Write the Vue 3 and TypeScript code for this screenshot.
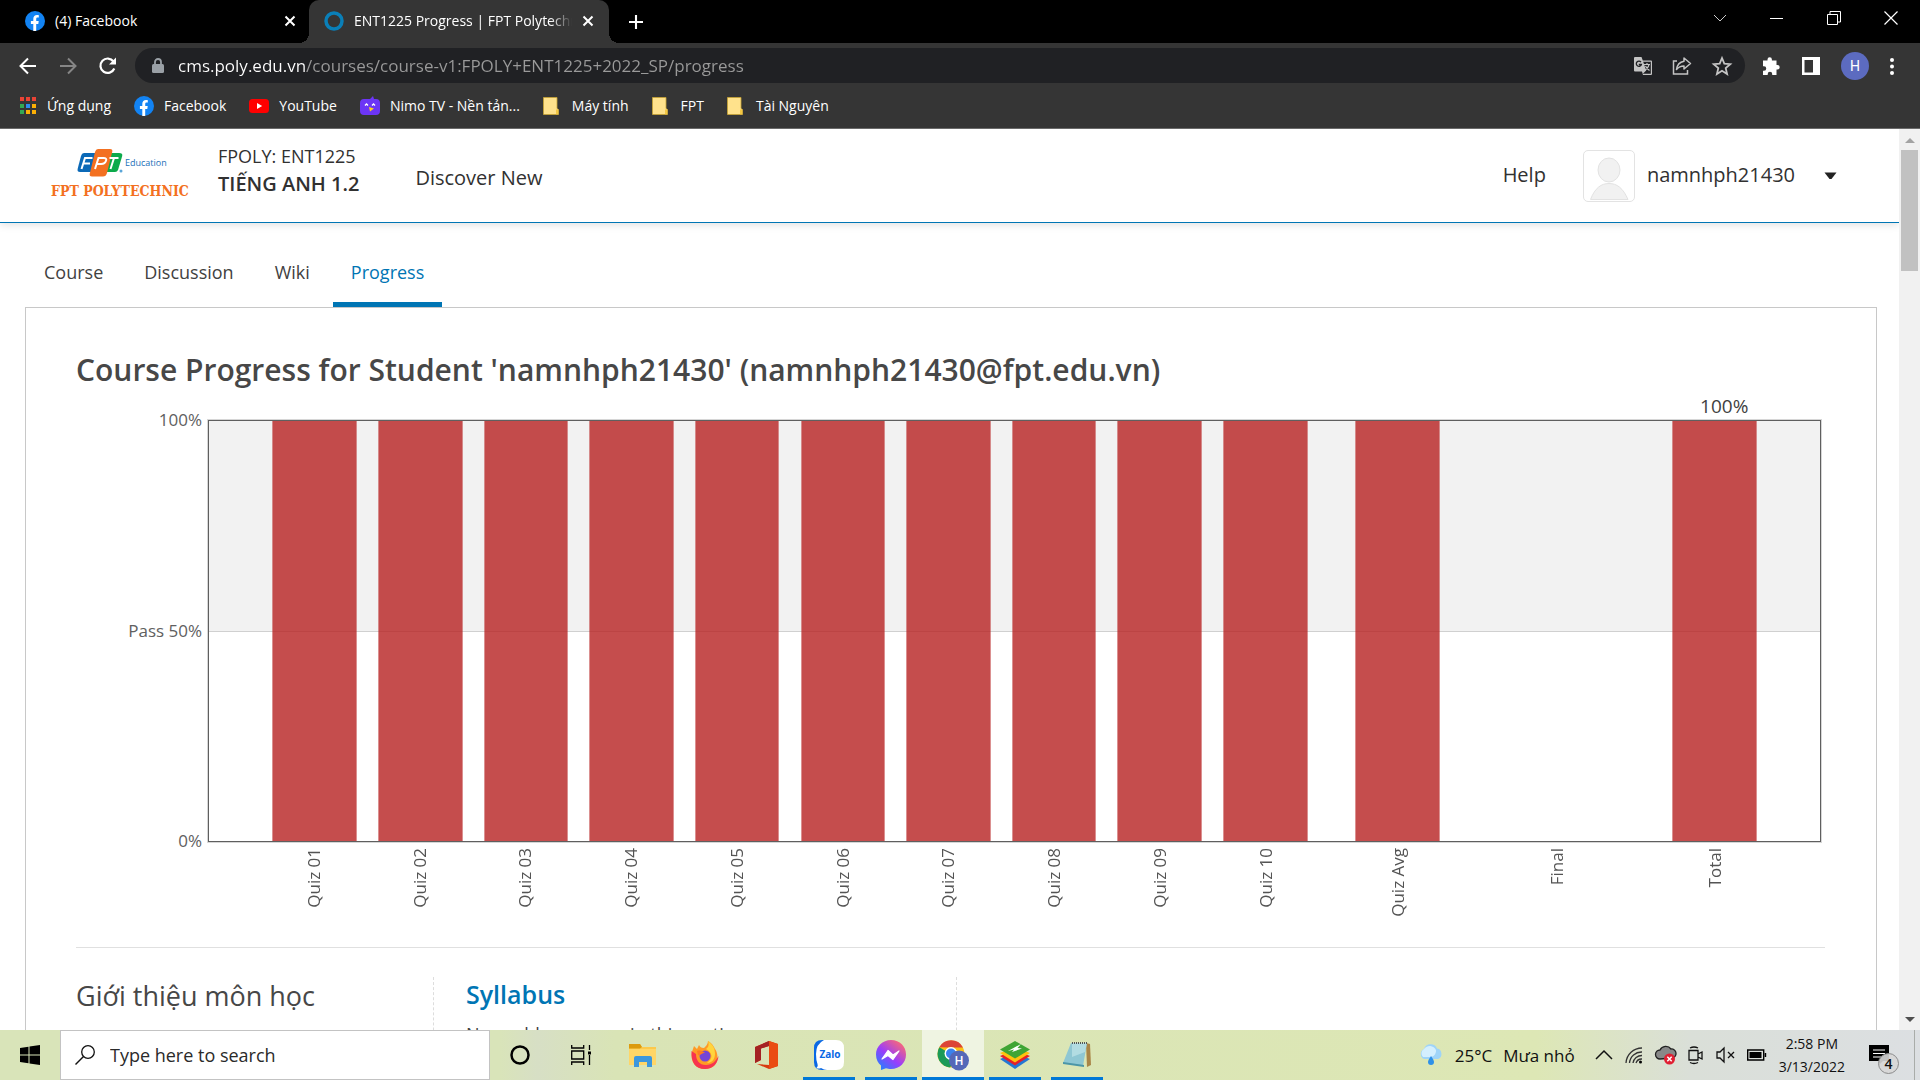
<script setup lang="ts">
interface Bar {
  label: string
  value: number
  gap: number
}

const host = 'cms.poly.edu.vn'
const path = '/courses/course-v1:FPOLY+ENT1225+2022_SP/progress'

const quizzes: Bar[] = Array.from({ length: 10 }, (_, i) => ({
  label: 'Quiz ' + String(i + 1).padStart(2, '0'),
  value: 100,
  gap: i === 0 ? 12 : 4,
}))

const bars: Bar[] = [
  ...quizzes,
  { label: 'Quiz Avg', value: 100, gap: 9 },
  { label: 'Final', value: 0, gap: 14 },
  { label: 'Total', value: 100, gap: 14 },
]

const columns = bars.map((b) => `${b.gap}fr 16fr`).join(' ') + ' 12fr'

const tabs = ['Course', 'Discussion', 'Wiki', 'Progress']
const active = 'Progress'
</script>

<template>
  <div class="screen">
    <header class="browser">
      <div class="tabstrip">
        <div class="tab">
          <svg class="i20" viewBox="0 0 20 20"><circle cx="10" cy="10" r="10" fill="#1283f3" /><path fill="#fff" d="M8.300 20v-7H5.900v-3h2.400V8c0-2.600 1.500-4 3.700-4 .9 0 1.800.2 1.800.2v2.400h-1.200c-1.100 0-1.400.7-1.400 1.400v2h2.500l-.4 3h-2.100v7z" /></svg>
          <span class="tab-title">(4) Facebook</span>
          <button class="plain" aria-label="Close tab"><svg class="i12" viewBox="0 0 12 12"><path d="M1.500 1.500l9 9M10.500 1.500l-9 9" stroke="#fff" stroke-width="2" /></svg></button>
        </div>
        <div class="tab current">
          <svg class="i20" viewBox="0 0 20 20"><circle cx="10" cy="10" r="8" fill="none" stroke="#0a7fb8" stroke-width="3.500" /></svg>
          <span class="tab-title">ENT1225 Progress | FPT Polytechnic</span>
          <button class="plain" aria-label="Close tab"><svg class="i12" viewBox="0 0 12 12"><path d="M1.500 1.500l9 9M10.500 1.500l-9 9" stroke="#fff" stroke-width="2" /></svg></button>
        </div>
        <button class="plain newtab" aria-label="New tab"><svg class="i14" viewBox="0 0 16 16"><path d="M8 0v16M0 8h16" stroke="#fff" stroke-width="2.400" /></svg></button>
        <div class="window-controls">
          <button class="plain" aria-label="Search tabs"><svg class="i14" viewBox="0 0 14 14"><path d="M1 4l6 6 6-6" fill="none" stroke="#ccc" /></svg></button>
          <button class="plain" aria-label="Minimize"><svg class="i14" viewBox="0 0 14 14"><path d="M0 7.500h13" stroke="#fff" /></svg></button>
          <button class="plain" aria-label="Restore"><svg class="i14" viewBox="0 0 14 14"><path d="M.5 3.500h10v10H.5zM3 3V.5h10.500v10.500H11" fill="none" stroke="#fff" /></svg></button>
          <button class="plain" aria-label="Close"><svg class="i14" viewBox="0 0 14 14"><path d="M.5 .5l13 13M13.500 .5l-13 13" stroke="#fff" stroke-width="1.200" /></svg></button>
        </div>
      </div>

      <div class="toolbar">
        <div class="nav-buttons">
          <button class="plain" aria-label="Back"><svg class="i20" viewBox="0 0 20 20"><path d="M18 10H3M10 2.500L2.500 10l7.500 7.500" fill="none" stroke="#fff" stroke-width="2" /></svg></button>
          <button class="plain" aria-label="Forward"><svg class="i20" viewBox="0 0 20 20"><path d="M2 10h15M10 2.500l7.500 7.500-7.500 7.500" fill="none" stroke="#868686" stroke-width="2" /></svg></button>
          <button class="plain" aria-label="Reload"><svg class="i20" viewBox="0 0 20 20"><path d="M16.300 12.500A7.200 7.200 0 1 1 15.500 5.500" fill="none" stroke="#fff" stroke-width="2.200" /><path d="M18 1.500v7h-7z" fill="#fff" /></svg></button>
        </div>
        <div class="omnibox">
          <svg class="lock" viewBox="0 0 12 16"><rect y="6" width="12" height="9" rx="1.500" fill="#9aa0a6" /><path d="M3 6.500V4a3 3 0 0 1 6 0v2.500" fill="none" stroke="#9aa0a6" stroke-width="1.800" /></svg>
          <input class="url" aria-label="Address" :value="host + path" />
          <button class="plain" aria-label="Translate"><svg class="i18" viewBox="0 0 18 18"><path d="M1 0h6.500l1.300 3.500h8.200a1 1 0 0 1 1 1V17a1 1 0 0 1-1 1H9l-1-3.500H1a1 1 0 0 1-1-1V1a1 1 0 0 1 1-1z" fill="#c4c4c4" /><path d="M9.200 4.700l3 8.700-3.400 3.400h8V4.700z" fill="#202124" /><path d="M7 5.200A2.600 2.600 0 1 0 7.400 7.500H4.800" fill="none" stroke="#202124" stroke-width="1.300" /><path d="M10 7.500h6M13 6v1.500M15 7.500c-.5 2.500-2 4.500-4 5.500M11.500 9c1 2 2 3 4 4.500" fill="none" stroke="#c4c4c4" stroke-width="1.200" /></svg></button>
          <button class="plain" aria-label="Share"><svg class="i20" viewBox="0 0 20 20"><path d="M5 5H1.500v13h14v-4" fill="none" stroke="#c4c4c4" stroke-width="1.500" /><path d="M12 2l6.500 5.500L12 13v-3c-3.500 0-5.500 1-7.500 3.500C5 9.500 7.500 6 12 5.200z" fill="none" stroke="#c4c4c4" stroke-width="1.500" stroke-linejoin="round" /></svg></button>
          <button class="plain" aria-label="Bookmark this page"><svg class="i20" viewBox="0 0 20 20"><path d="M10 2l2.300 5.600 6 .5-4.600 4 1.400 5.900-5.100-3.200L4.900 18l1.400-5.900-4.600-4 6-.5z" fill="none" stroke="#c4c4c4" stroke-width="1.800" /></svg></button>
        </div>
        <div class="extensions">
          <button class="plain" aria-label="Extensions"><svg class="i20" viewBox="0 0 20 20"><path fill="#fff" d="M2 4.500h4.500V3.500a2.200 2.200 0 0 1 4.400 0v1h4.600V9h1a2.200 2.200 0 0 1 0 4.400h-1V19h-4.300v-1a2.200 2.200 0 0 0-4.500 0v1H2v-4.300h1a2.200 2.200 0 0 0 0-4.500H2z" /></svg></button>
          <button class="plain" aria-label="Side panel"><svg class="i18" viewBox="0 0 18 18"><path fill="#fff" fill-rule="evenodd" d="M0 0h18v18H0zM2.500 3v12.500H11V3z" /></svg></button>
          <button class="plain profile" aria-label="Profile">H</button>
          <button class="plain" aria-label="Menu"><svg class="dots" viewBox="0 0 4 18"><circle cx="2" cy="3" r="2" fill="#fff" /><circle cx="2" cy="9.500" r="2" fill="#fff" /><circle cx="2" cy="16" r="2" fill="#fff" /></svg></button>
        </div>
      </div>

      <nav class="bookmarks" aria-label="Bookmarks">
        <a href="#"><svg class="i18" viewBox="0 0 18 18"><path fill="#ea4335" d="M1 0h4v4H1zM7 0h4v4H7zM13 0h4v4h-4z" /><path fill="#34a853" d="M1 7h4v4H1zM1 13h4v4H1z" /><path fill="#2d8cf0" d="M7 7h4v4H7z" /><path fill="#fbaf05" d="M13 7h4v4h-4zM7 13h4v4H7zM13 13h4v4h-4z" /></svg>Ứng dụng</a>
        <a href="#"><svg class="i20" viewBox="0 0 20 20"><circle cx="10" cy="10" r="10" fill="#1283f3" /><path fill="#fff" d="M8.300 20v-7H5.900v-3h2.400V8c0-2.600 1.500-4 3.700-4 .9 0 1.800.2 1.800.2v2.400h-1.200c-1.100 0-1.400.7-1.400 1.400v2h2.500l-.4 3h-2.100v7z" /></svg>Facebook</a>
        <a href="#"><svg class="i20" viewBox="0 0 20 20"><rect y="3" width="20" height="14" rx="3.500" fill="#f00" /><path d="M8 7l5.200 3L8 13z" fill="#fff" /></svg>YouTube</a>
        <a href="#"><svg class="i20" viewBox="0 0 20 20"><path d="M4 3h6l3-3 1 3h2a4 4 0 0 1 4 4v8a4 4 0 0 1-4 4H4a4 4 0 0 1-4-4V7a4 4 0 0 1 4-4z" fill="#6c35f5" /><path d="M5 9.500l1.500-1.500L8 9.500M12 9.500L13.500 8 15 9.500" fill="none" stroke="#fff" stroke-width="1.300" /><path d="M9 11l5 1.500-4 3z" fill="#fdd01c" /></svg>Nimo TV - Nền tản...</a>
        <a v-for="name in ['Máy tính', 'FPT', 'Tài Nguyên']" :key="name" class="folder" href="#"><svg class="i18" viewBox="0 0 18 18"><path d="M.5 .5h13.500v11l1.500 1v5H.5z" fill="#ffe28c" stroke="#c9a534" stroke-width=".8" /><path d="M13 12.500h2.200v4.800H13z" fill="#f3c743" /></svg>{{ name }}</a>
      </nav>
    </header>

    <div class="viewport">
      <main class="page">
        <header class="site-header">
          <svg class="logo" viewBox="0 0 140 50">
            <path d="M33 5h17l-6 19H29q-3 0-2.400-3L30 8q.8-3 3-3z" fill="#0b69b7" />
            <path d="M59 5h9q4 0 3.200 3L67 22q-.8 2-3 2H53z" fill="#0caa4b" />
            <path d="M47 1h12q3 0 2.200 3L56 25q-1 3.500-4 3.500H41q-3 0-2.200-3L44 4q.8-3 3-3z" fill="#f37021" />
            <path d="M30.500 21l3.500-11h7.500M32.500 15.500h6.500M44 21l3.500-11h5q3.500 0 2.600 2.500-1 3.500-5 3.500h-4M58.500 10h9M63 10L59.500 21" fill="none" stroke="#fff" stroke-width="2" />
            <circle cx="70" cy="23" r="1.500" fill="#5aa5d8" />
            <text x="74" y="18" class="logo-edu">Education</text>
            <text x="0" y="48" class="logo-poly">FPT POLYTECHNIC</text>
          </svg>
          <div class="course">
            <span>FPOLY: ENT1225</span>
            <strong>TIẾNG ANH 1.2</strong>
          </div>
          <a class="discover" href="#">Discover New</a>
          <a class="help" href="#">Help</a>
          <a class="user" href="#">
            <svg class="avatar" viewBox="0 0 50 50"><g fill="#f1f1f1" stroke="#e2e2e2"><ellipse cx="25" cy="19" rx="11" ry="12" /><path d="M6.500 48.500C11 37 17 32.500 25 32.500s14 4.500 19 16z" /></g></svg>
            <span>namnhph21430</span>
          </a>
          <button class="plain caret" aria-label="More options"><svg viewBox="0 0 12 8"><path d="M0 .5h12L7 7H5z" fill="#222" /></svg></button>
        </header>

        <nav class="course-tabs" aria-label="Course">
          <a v-for="t in tabs" :key="t" href="#" :class="{ selected: t === active }">{{ t }}</a>
        </nav>

        <section class="card">
          <h1>Course Progress for Student 'namnhph21430' (namnhph21430@fpt.edu.vn)</h1>

          <div class="chart">
            <div class="y-axis">
              <span>100%</span>
              <span>Pass 50%</span>
              <span>0%</span>
            </div>
            <div class="graph">
              <div class="row totals" :style="{ gridTemplateColumns: columns }">
                <span>100%</span>
              </div>
              <div class="row plot" :style="{ gridTemplateColumns: columns }">
                <template v-for="b in bars" :key="b.label">
                  <i></i>
                  <div class="bar" :class="{ empty: b.value === 0 }" :style="{ height: b.value + '%' }"></div>
                </template>
              </div>
              <div class="row names" :style="{ gridTemplateColumns: columns }">
                <template v-for="b in bars" :key="b.label">
                  <i></i>
                  <span>{{ b.label }}</span>
                </template>
              </div>
            </div>
          </div>

          <div class="chapter">
            <h2>Giới thiệu môn học</h2>
            <div class="sections">
              <h3><a href="#">Syllabus</a></h3>
              <p>No problem scores in this section</p>
            </div>
          </div>
        </section>
      </main>
      <div class="scrollbar" aria-hidden="true">
        <svg viewBox="0 0 10 6"><path d="M5 0l5 5H0z" fill="#a3a3a3" /></svg>
        <div class="thumb"></div>
        <svg viewBox="0 0 10 6"><path d="M0 0h10L5 5z" fill="#505050" /></svg>
      </div>
    </div>

    <footer class="taskbar">
      <button class="plain start" aria-label="Start"><svg class="i20" viewBox="0 0 20 20"><path d="M0 3l8.500-1.200v7.700H0zM9.500 1.600L20 0v9.500H9.500zM0 10.500h8.500v7.700L0 17zM9.500 10.500H20V20L9.500 18.400z" /></svg></button>
      <label class="search">
        <svg class="i20" viewBox="0 0 20 20"><circle cx="13" cy="7" r="6.300" fill="none" stroke="#111" stroke-width="1.300" /><path d="M8.500 11.500L.5 19.500" stroke="#111" stroke-width="1.500" /></svg>
        <input type="text" placeholder="Type here to search" aria-label="Search" />
      </label>
      <div class="apps">
        <button class="plain narrow" aria-label="Cortana"><svg class="i20" viewBox="0 0 20 20"><circle cx="10" cy="10" r="8.500" fill="none" stroke="#000" stroke-width="2.500" /></svg></button>
        <button class="plain" aria-label="Task view"><svg class="i20" viewBox="0 0 20 20"><path d="M.7 0v3h12V0M.7 20v-3h12v3M.7 6h12v8H.7zM18.500 0v5M18.500 10v10" fill="none" stroke="#000" stroke-width="1.300" /><path d="M17 6.500h3v3h-3z" /></svg></button>
        <button class="plain" aria-label="File Explorer"><svg class="i30" viewBox="0 0 30 30"><path d="M1 4h11l2 3h14v18H1z" fill="#fcc94b" /><path d="M1 4h11l2 3-2 1.500H1z" fill="#dc9b0e" /><path d="M1 9h27v16H1z" fill="#ffd667" /><path d="M6 27V18q0-2 2-2h14q2 0 2 2v9h-5v-5h-8v5z" fill="#3c97dd" /></svg></button>
        <button class="plain" aria-label="Firefox"><svg class="i30" viewBox="0 0 30 30"><path d="M18 1c5 3 6 6 7 8 4 5 5 20-10 20C4 29-1 19 3 9l1-3 3 3 2-4c1 2 2 3 5 3 2-2 4-4 4-7z" fill="#ff9a25" /><path d="M1.500 11C1 22 5 29 15 29c8 0 13-6 13.500-13C26 21 22 25 16 25 9 25 6 20 6 14z" fill="#f7344f" /><path d="M18 1c5 4 7 7 7 13 0 5-3 9-8 9 7-5 5-11-1-14 3-2 3-5 2-8z" fill="#ffd53d" /><circle cx="15" cy="16" r="5.500" fill="#7545d8" /><path d="M7 11c3-1 6 0 8 2-4 0-4 3-7 2z" fill="#ff7a22" /></svg></button>
        <button class="plain" aria-label="Office"><svg class="i30" viewBox="0 0 30 30"><path d="M3 7L17 1l9 3v22l-9 3L5 24l12 1V6L9 8.500V20l-6 3z" fill="#d83b10" /><path d="M3 7L17 1v5L9 8.500V20l-6 3z" fill="#a42223" /><path d="M17 1l9 3v22l-9 3z" fill="#ea4c13" /></svg></button>
        <button class="plain running" aria-label="Zalo"><svg class="i30" viewBox="0 0 30 30"><path d="M8 0h13v30H8q-8 0-8-8V8q0-8 8-8z" fill="#0968e5" /><path d="M10 0h12q8 0 8 8v14q0 8-8 8h-9q-3 0-6-2-2 1-4.500 0 2-2 1-4Q2 20 2 14 2 4 10 0z" fill="#fff" /><text x="16" y="18" text-anchor="middle" class="zalo">Zalo</text></svg></button>
        <button class="plain running" aria-label="Messenger"><svg class="i30" viewBox="0 0 30 30"><defs><linearGradient id="msg" x1="0" y1="1" x2=".8" y2="0"><stop offset="0" stop-color="#0a90ff" /><stop offset=".5" stop-color="#9a3dfb" /><stop offset="1" stop-color="#ff6a70" /></linearGradient></defs><path d="M15 0c9 0 15 6.500 15 14.500S24 29 15 29c-2 0-3.500-.3-5-.8L5 30v-4.500C2 23 0 19.500 0 14.500 0 6.500 6.500 0 15 0z" fill="url(#msg)" /><path d="M6 19l6-8.500 5 4.500 6-4-6 8.500-5-4z" fill="#fff" stroke="#fff" stroke-width="1.200" stroke-linejoin="round" /></svg></button>
        <button class="plain running focused" aria-label="Chrome"><svg class="i32" viewBox="0 0 32 32"><circle cx="14" cy="15" r="13.500" fill="#fbc116" /><path d="M14 15L2.300 8.300A13.500 13.500 0 0 0 13 28.500l6-9z" fill="#1b9a58" /><path d="M2.300 8.300A13.500 13.500 0 0 1 26 8.500H14z" fill="#dc4437" /><circle cx="14" cy="14.500" r="6.500" fill="#fff" /><circle cx="14" cy="14.500" r="5" fill="#3a83ee" /><circle cx="22" cy="21.500" r="10" fill="#5468b8" /><text x="22" y="26" text-anchor="middle" class="badge-h">H</text></svg></button>
        <button class="plain running" aria-label="BlueStacks"><svg class="i30" viewBox="0 0 30 30"><path d="M0 19l15-6 15 6-15 10z" fill="#2577d4" /><path d="M0 16l15-6 15 6-15 9.500z" fill="#e5202b" /><path d="M0 13l15-6 15 6-15 9.500z" fill="#ffc20e" /><path d="M0 9.500L15 1l15 8.500-15 9z" fill="#3fa535" /><path d="M8 11L21 4l-3.500 4 4.500.5-10 3.500 2-2.500z" fill="#fff" /></svg></button>
        <button class="plain running" aria-label="Notepad"><svg class="i30" viewBox="0 0 30 30"><path d="M24 3l4 1 1 21-4 2z" fill="#a98547" /><path d="M9 3h16l-4 23-20-3z" fill="#8fc7d3" /><path d="M10 3h15l-2 9-13 5z" fill="#c9e9ec" opacity=".6" /><path d="M1 22l21 3v2L1 24z" fill="#4c96a8" /><path d="M10 3h16" stroke="#555" stroke-width="2" stroke-dasharray="1 1" /></svg></button>
      </div>
      <div class="tray">
        <button class="plain weather">
          <svg class="cloud" viewBox="0 0 26 20"><path d="M6 14a5.500 5.500 0 0 1 0-10A7 7 0 0 1 19 3.500a5.500 5.500 0 0 1 1 10.500z" fill="#9fd4f8" /><path d="M5 12a5 5 0 0 1 1-8 7 7 0 0 1 12 1 6 6 0 0 1-5 7z" fill="#d4effe" /><path d="M13 11q3 4 3 6a3 3 0 0 1-6 0q0-2 3-6z" fill="#2f91e8" /></svg>
          <span>25°C</span><span>Mưa nhỏ</span>
        </button>
        <svg class="i18" viewBox="0 0 18 18"><path d="M1 13l8-8 8 8" fill="none" stroke="#111" stroke-width="1.500" /></svg>
        <svg class="i18" viewBox="0 0 18 18"><g fill="none" stroke="#333" stroke-width="1.300"><path d="M1 17A16 16 0 0 1 17 2M4.500 17A12 12 0 0 1 17 6M8 17a9 9 0 0 1 9-7.500" /><path d="M11 17a6 6 0 0 1 6-4" /></g><circle cx="15.500" cy="16" r="1.500" /></svg>
        <svg class="i20" viewBox="0 0 20 20"><path d="M5 14a4.500 4.500 0 0 1 0-9 6.500 6.500 0 0 1 11-1 4.500 4.500 0 0 1 1 9z" fill="#888" stroke="#222" stroke-width="1.300" /><circle cx="14.500" cy="14" r="5.500" fill="#e01f32" /><path d="M12.300 11.800l4.400 4.400M16.700 11.800l-4.400 4.400" stroke="#fff" stroke-width="1.500" /></svg>
        <svg class="i18" viewBox="0 0 18 18"><path d="M2 4.500h9v9.500H2zM11 8l4-2v7l-4-2M3 2q4-2 8 0M3 16.500q4 2 8 0" fill="none" stroke="#111" stroke-width="1.300" /></svg>
        <svg class="i18" viewBox="0 0 18 18"><path d="M0 6h3l4-4v14l-4-4H0zM11 6l6 6M17 6l-6 6" fill="none" stroke="#111" stroke-width="1.300" /></svg>
        <svg class="i20" viewBox="0 0 20 20"><path d="M.7 5h16v10H.7zM18.500 8v4" fill="none" stroke="#000" stroke-width="1.400" /><path d="M2.500 7h12v6h-12z" /></svg>
        <div class="clock"><span>2:58 PM</span><span>3/13/2022</span></div>
        <button class="plain notes" aria-label="Notifications">
          <svg class="i20" viewBox="0 0 20 20"><path d="M0 0h20v16h-6l-4 4v-4H0z" /><path d="M4 5h12M4 8.500h12M4 12h8" stroke="#fff" stroke-width="1.200" /></svg>
          <span>4</span>
        </button>
      </div>
    </footer>
  </div>
</template>

<style>
html,
body {
  margin: 0;
  background: #fff;
  overflow: hidden;
}
</style>

<style scoped>
.screen {
  display: flex;
  flex-direction: column;
  height: 100vh;
  overflow: hidden;
  font-family: 'Open Sans', 'Noto Sans', sans-serif;
}
.screen * {
  box-sizing: border-box;
}
a {
  color: inherit;
  text-decoration: none;
}
svg {
  display: block;
  flex: none;
  overflow: visible;
}
.plain {
  display: flex;
  align-items: center;
  justify-content: center;
  flex: none;
  padding: 0;
  border: 0;
  background: none;
  color: inherit;
  font: inherit;
}
.i12 { width: 12px; height: 12px; }
.i14 { width: 14px; height: 14px; }
.i18 { width: 18px; height: 18px; }
.i20 { width: 20px; height: 20px; }
.i30 { width: 30px; height: 30px; }
.i32 { width: 32px; height: 32px; }

/* browser chrome */
.browser {
  flex: none;
  background: #353535;
  border-bottom: 1px solid #6a6a6a;
  color: #fff;
  font-size: 14px;
}
.tabstrip {
  display: flex;
  height: 43px;
  background: #000;
}
.tab {
  position: relative;
  display: flex;
  align-items: center;
  gap: 10px;
  width: 309px;
  padding: 0 13px 2px 25px;
}
.tab-title {
  flex: 1;
  min-width: 0;
  overflow: hidden;
  white-space: nowrap;
}
.tab.current {
  width: 300px;
  padding: 0 15px 2px;
  background: #353535;
  border-radius: 10px 10px 0 0;
}
.current .tab-title {
  -webkit-mask-image: linear-gradient(90deg, #000 90%, transparent);
  mask-image: linear-gradient(90deg, #000 90%, transparent);
}
.tab.current::before,
.tab.current::after {
  content: '';
  position: absolute;
  bottom: 0;
  width: 10px;
  height: 10px;
}
.tab.current::before {
  right: 100%;
  background: radial-gradient(circle at 0 0, transparent 10px, #353535 10px);
}
.tab.current::after {
  left: 100%;
  background: radial-gradient(circle at 100% 0, transparent 10px, #353535 10px);
}
.newtab {
  width: 54px;
}
.window-controls {
  display: flex;
  margin: 0 1px 0 auto;
  height: 36px;
}
.window-controls button {
  width: 57px;
}
.toolbar {
  display: flex;
  align-items: center;
  height: 45px;
  padding-right: 26px;
}
.nav-buttons {
  display: flex;
  justify-content: space-between;
  width: 135px;
  padding: 0 17px 0 18px;
}
.omnibox {
  flex: 1;
  display: flex;
  align-items: center;
  gap: 20px;
  height: 35px;
  padding: 0 13px 0 17px;
  border-radius: 18px;
  background: #202124;
}
.lock {
  width: 12px;
  height: 16px;
}
.url {
  flex: 1;
  min-width: 0;
  margin-left: -6px;
  padding: 0;
  border: 0;
  outline: 0;
  font: 17px/24px 'Open Sans', 'Noto Sans', sans-serif;
  color: #fff;
  background: linear-gradient(90deg, #fff 127px, #9a9a9a 127px);
  -webkit-background-clip: text;
  background-clip: text;
  -webkit-text-fill-color: transparent;
}
.extensions {
  display: flex;
  align-items: center;
  gap: 21px;
  padding-left: 16px;
}
.profile {
  width: 28px;
  height: 28px;
  border-radius: 50%;
  background: #5c6bc0;
  font-family: Roboto, sans-serif;
}
.dots {
  width: 4px;
  height: 18px;
}
.bookmarks {
  display: flex;
  gap: 23px;
  height: 40px;
  padding: 0 19px 5px;
  align-items: center;
}
.bookmarks a {
  display: flex;
  align-items: center;
  gap: 10px;
  height: 36px;
}
.bookmarks .folder {
  gap: 11px;
}

/* web page */
.viewport {
  flex: 1;
  display: flex;
  min-height: 0;
  background: #fff;
}
.page {
  flex: 1;
  min-width: 0;
  overflow: hidden;
  color: #414141;
}
.site-header {
  display: flex;
  align-items: center;
  height: 94px;
  padding: 0 62px 0 51px;
  border-bottom: 1px solid #0075b4;
  box-shadow: 0 2px 8px rgba(0, 0, 0, 0.12);
  color: #313131;
  font-size: 20px;
}
.logo {
  width: 140px;
  height: 50px;
  margin-bottom: 6px;
}
.logo-edu {
  font: 9px 'Open Sans', sans-serif;
  fill: #1b6fb8;
}
.logo-poly {
  font: bold 14px 'DejaVu Serif Condensed', 'DejaVu Serif', serif;
  fill: #f37021;
}
.course {
  display: flex;
  flex-direction: column;
  margin-left: 27px;
  padding-bottom: 11px;
  font-size: 18px;
  line-height: 27px;
}
.course strong {
  font-size: 20px;
  font-weight: 600;
}
.discover {
  margin-left: 56px;
  padding-top: 4px;
}
.help {
  margin-left: auto;
  padding-bottom: 2px;
}
.user {
  display: flex;
  align-items: center;
  gap: 12px;
  margin-left: 37px;
}
.user span {
  padding-bottom: 2px;
}
.avatar {
  width: 52px;
  height: 52px;
  border: 1px solid #e3e3e3;
  border-radius: 5px;
}
.caret {
  margin-left: 29px;
}
.caret svg {
  width: 13px;
  height: 8px;
}
.course-tabs {
  display: flex;
  gap: 5px;
  padding-left: 26px;
  font-size: 18px;
  line-height: 26px;
}
.course-tabs a {
  padding: 36px 18px 17px;
  border-bottom: 5px solid transparent;
}
.course-tabs .selected {
  border-color: #0075b4;
  color: #0075b4;
}
.card {
  margin: 0 22px 0 25px;
  padding: 42px 51px 0 50px;
  border: 1px solid #c8c8c8;
  height: 1000px;
}
h1,
h2,
h3,
p {
  margin: 0;
}
h1 {
  margin-bottom: 4px;
  font-size: 30px;
  line-height: 40px;
  font-weight: 600;
  color: #474747;
}
.chart {
  display: flex;
  border-bottom: 1px solid #e0e0e0;
}
.y-axis {
  display: flex;
  flex-direction: column;
  justify-content: space-between;
  width: 132px;
  height: 459px;
  padding: 14px 6px 0 0;
  text-align: right;
  font-size: 17px;
  line-height: 24px;
  color: #606060;
}
.graph {
  flex: 1;
  margin-right: 4px;
}
.row {
  display: grid;
}
.totals {
  height: 26px;
  font-size: 19px;
  line-height: 24px;
}
.totals span {
  grid-column: -3;
  padding-left: 18px;
  text-align: center;
}
.plot {
  align-items: end;
  height: 422px;
  border: 1px solid #5f5f5f;
  box-shadow: 0 0 0 1px #d6d6d6;
  background: linear-gradient(#f2f2f2 210px, #d0d0d0 210px, #d0d0d0 211px, #fff 211px);
}
.bar {
  border: solid rgba(183, 33, 33, 0.5);
  border-width: 0 1px;
  background: rgba(183, 33, 33, 0.8);
  background-clip: padding-box;
}
.bar.empty {
  border: 0;
}
.names {
  height: 105px;
  padding-top: 6px;
  align-items: start;
  justify-items: center;
  font-size: 17px;
  line-height: 24px;
  color: #545454;
}
.names span {
  writing-mode: vertical-rl;
  transform: rotate(180deg);
  white-space: nowrap;
}
.chapter {
  display: flex;
  padding-top: 29px;
}
.chapter h2 {
  width: 358px;
  height: 200px;
  border-right: 1px dashed #ddd;
  font-size: 27px;
  line-height: 38px;
  font-weight: 400;
  color: #474747;
}
.sections {
  width: 523px;
  height: 200px;
  padding-left: 32px;
  border-right: 1px dashed #ddd;
}
h3 {
  font-size: 25px;
  line-height: 35px;
  font-weight: 600;
  color: #0075b4;
}
.sections p {
  padding-top: 9px;
  font-size: 18px;
  line-height: 26px;
}
.scrollbar {
  display: flex;
  flex-direction: column;
  align-items: center;
  width: 21px;
  padding: 9px 0 7px;
  background: #f1f1f1;
}
.scrollbar svg {
  width: 10px;
  height: 6px;
}
.thumb {
  width: 17px;
  height: 121px;
  margin: 6px 0 auto;
  background: #c1c1c1;
}

/* taskbar */
.taskbar {
  display: flex;
  flex: none;
  height: 50px;
  background: linear-gradient(90deg, #d9e4b9 0, #d9e4b9 26%, #d7dfc5 28%, #d9e4b6 32%, #dde7b5 80%, #dadfd8 88%, #dcdfe2 100%);
  color: #111;
  font-size: 18px;
}
.start {
  width: 60px;
  padding-right: 1px;
}
.search {
  display: flex;
  align-items: center;
  gap: 15px;
  width: 430px;
  padding: 0 14px;
  border: 1px solid #c3c3c3;
  background: #fff;
}
.search input {
  flex: 1;
  min-width: 0;
  padding: 0;
  border: 0;
  outline: 0;
  background: none;
  font: 18px/24px 'Open Sans', 'Noto Sans', sans-serif;
}
.search input::placeholder {
  color: #2a2a2a;
  opacity: 1;
}
.apps {
  display: flex;
}
.apps button {
  position: relative;
  width: 62px;
}
.apps .narrow {
  width: 60px;
}
.focused {
  background: #eff4e2;
}
.running::after {
  content: '';
  position: absolute;
  left: 5px;
  right: 5px;
  bottom: 0;
  height: 3px;
  background: #0078d7;
}
.focused::after {
  left: 0;
  right: 0;
}
.zalo {
  font: 700 10px 'Open Sans', sans-serif;
  fill: #0968e5;
}
.badge-h {
  font: 500 12px Roboto, sans-serif;
  fill: #fff;
}
.tray {
  display: flex;
  align-items: center;
  gap: 12px;
  margin-left: auto;
  margin-right: 5px;
  padding-right: 15px;
  border-right: 1px solid #a9aca9;
}
.weather {
  gap: 11px;
  margin-right: 8px;
  font-size: 17px;
}
.cloud {
  width: 26px;
  height: 20px;
}
.clock {
  display: flex;
  flex-direction: column;
  align-items: center;
  font-size: 14px;
  line-height: 23px;
}
.notes {
  position: relative;
  margin: 0 10px 0 12px;
}
.notes span {
  position: absolute;
  left: 9px;
  top: 8px;
  width: 21px;
  height: 21px;
  border: 1px solid #8b8b8b;
  border-radius: 50%;
  background: rgba(215, 215, 215, 0.9);
  font-size: 14px;
  line-height: 19px;
  font-weight: 600;
}
</style>
